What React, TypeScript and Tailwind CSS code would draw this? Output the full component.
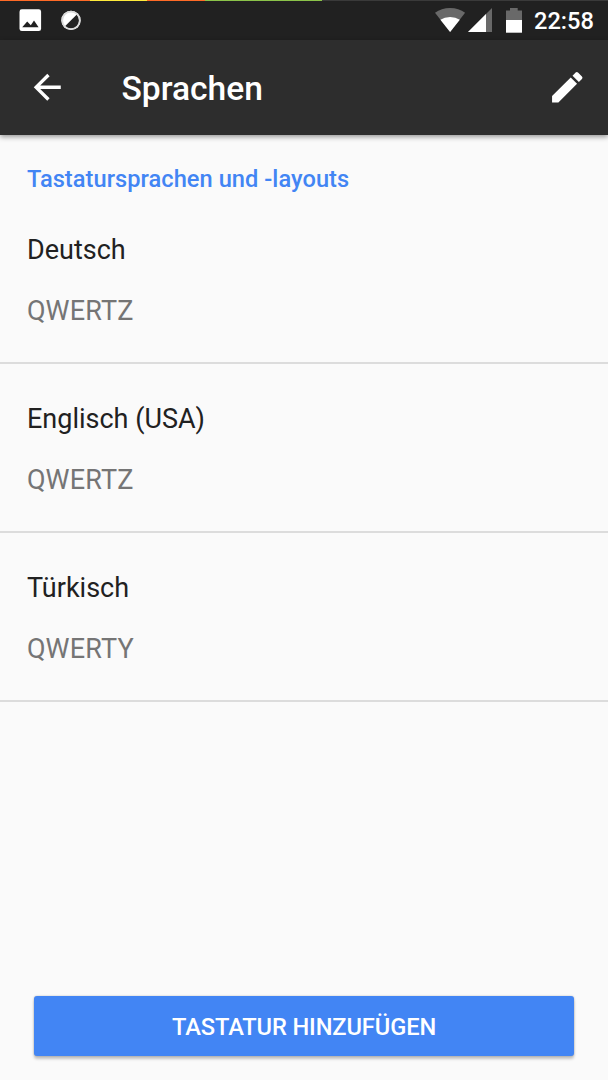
const languages = [
  { name: "Deutsch", layout: "QWERTZ" },
  { name: "Englisch (USA)", layout: "QWERTZ" },
  { name: "Türkisch", layout: "QWERTY" },
];

function StatusBar() {
  return (
    <div className="flex h-10 shrink-0 flex-col bg-[#212121]">
      <div className="flex h-px w-full bg-[#3a3a3a]">
        <div className="w-[90px] bg-[#ff6a26]" />
        <div className="w-[57px] bg-[#ffeb3b]" />
        <div className="w-[58px] bg-[#ff6a26]" />
        <div className="w-[117px] bg-[#8bc34a]" />
      </div>
      <div className="flex flex-1 items-start pr-[14px] pl-[19px]">
        <svg className="mt-2 h-[23px] w-[23px]" viewBox="0 0 23 23">
          <rect x="0.5" y="0.3" width="21.6" height="21.8" rx="2.4" fill="#fff" />
          <path d="M3.2 18.3 L8.2 12.5 L11.8 16.2 L15 11.6 L19.6 18.3 Z" fill="#212121" />
        </svg>
        <svg className="mt-2 ml-[18px] h-6 w-[22px]" viewBox="0 0 22 24">
          <circle cx="11" cy="11.4" r="9.6" fill="#fff" />
          <path d="M16.8 5.4 A8.3 8.3 0 0 1 5 17.2 Z" fill="#222" />
          <circle cx="11" cy="11.4" r="8.8" fill="none" stroke="#dadada" strokeWidth="1.8" />
        </svg>
        <div className="flex-1" />
        <svg className="mt-[7px] h-6 w-[31px]" viewBox="0 0 31 24">
          <path d="M15.1 24 L0 4.8 Q6.3 0 15.1 0 Q23.9 0 30.1 4.8 Z" fill="#696969" />
          <path d="M15.1 24 L5.4 11.8 Q9.5 9 15.1 9 Q20.7 9 24.8 11.8 Z" fill="#fff" />
        </svg>
        <svg className="mt-[7px] ml-[2px] h-6 w-6" viewBox="0 0 24 24">
          <path d="M24 0 V24 H0 Z" fill="#696969" />
          <path d="M18 6 V24 H0 Z" fill="#fff" />
        </svg>
        <svg className="mt-[7px] ml-[13px] h-[25px] w-[18px]" viewBox="0 0 18 25">
          <path d="M1 2.4 H5 V0 H12.7 V2.4 H17 V13 H1 Z" fill="#696969" />
          <rect x="1" y="12" width="16" height="12.7" fill="#fff" />
        </svg>
        <span className="mt-[6px] ml-[11px] w-[60px] text-[23.64px] leading-7 font-medium whitespace-nowrap text-white">
          22:58
        </span>
      </div>
    </div>
  );
}

function AppBar() {
  return (
    <header className="z-10 flex h-[95px] shrink-0 items-center bg-[#2d2d2d] pr-[21px] pl-[27px] text-white shadow-[0_2px_5px_rgba(0,0,0,0.4)]">
      <button aria-label="Zurück">
        <svg className="h-[40.5px] w-[40.5px]" viewBox="0 0 24 24" fill="currentColor">
          <path d="M20 11H7.83l5.59-5.59L12 4l-8 8 8 8 1.41-1.41L7.83 13H20v-2z" />
        </svg>
      </button>
      <h1 className="ml-[54px] flex-1 pt-[2px] text-[33.6px] leading-10 font-medium">Sprachen</h1>
      <button aria-label="Bearbeiten">
        <svg className="h-[40.5px] w-[40.5px]" viewBox="0 0 24 24" fill="currentColor">
          <path d="M3 17.25V21h3.75L17.81 9.94l-3.75-3.75L3 17.25zM20.71 7.04a1 1 0 0 0 0-1.41l-2.34-2.34a1 1 0 0 0-1.41 0l-1.83 1.83 3.75 3.75 1.83-1.83z" />
        </svg>
      </button>
    </header>
  );
}

export default function App() {
  return (
    <div className="flex h-[1080px] w-[608px] flex-col overflow-hidden bg-[#fafafa] font-['Roboto',sans-serif]">
      <StatusBar />
      <AppBar />
      <main className="flex flex-1 flex-col">
        <h2 className="h-[60px] px-[27px] pt-[30px] text-[23.64px] leading-7 font-medium tracking-[0.04px] text-[#4285f4]">
          Tastatursprachen und -layouts
        </h2>
        <ul>
          {languages.map((language) => (
            <li
              key={language.name}
              className="flex h-[169px] flex-col gap-[29px] border-b-2 border-[#dcdcdc] px-[27px] pt-[39px] text-[27px] leading-8"
            >
              <span className="text-[#212121]">{language.name}</span>
              <span className="tracking-[0.2px] text-[#757575]">{language.layout}</span>
            </li>
          ))}
        </ul>
        <button className="mx-[34px] mt-auto mb-6 h-[60px] rounded-[3px] bg-[#4285f4] pt-[2px] text-[23.64px] leading-7 font-medium tracking-[-0.1px] text-white shadow-[0_3px_3px_rgba(0,0,0,0.22),0_0_2px_rgba(0,0,0,0.25)]">
          TASTATUR HINZUFÜGEN
        </button>
      </main>
    </div>
  );
}
